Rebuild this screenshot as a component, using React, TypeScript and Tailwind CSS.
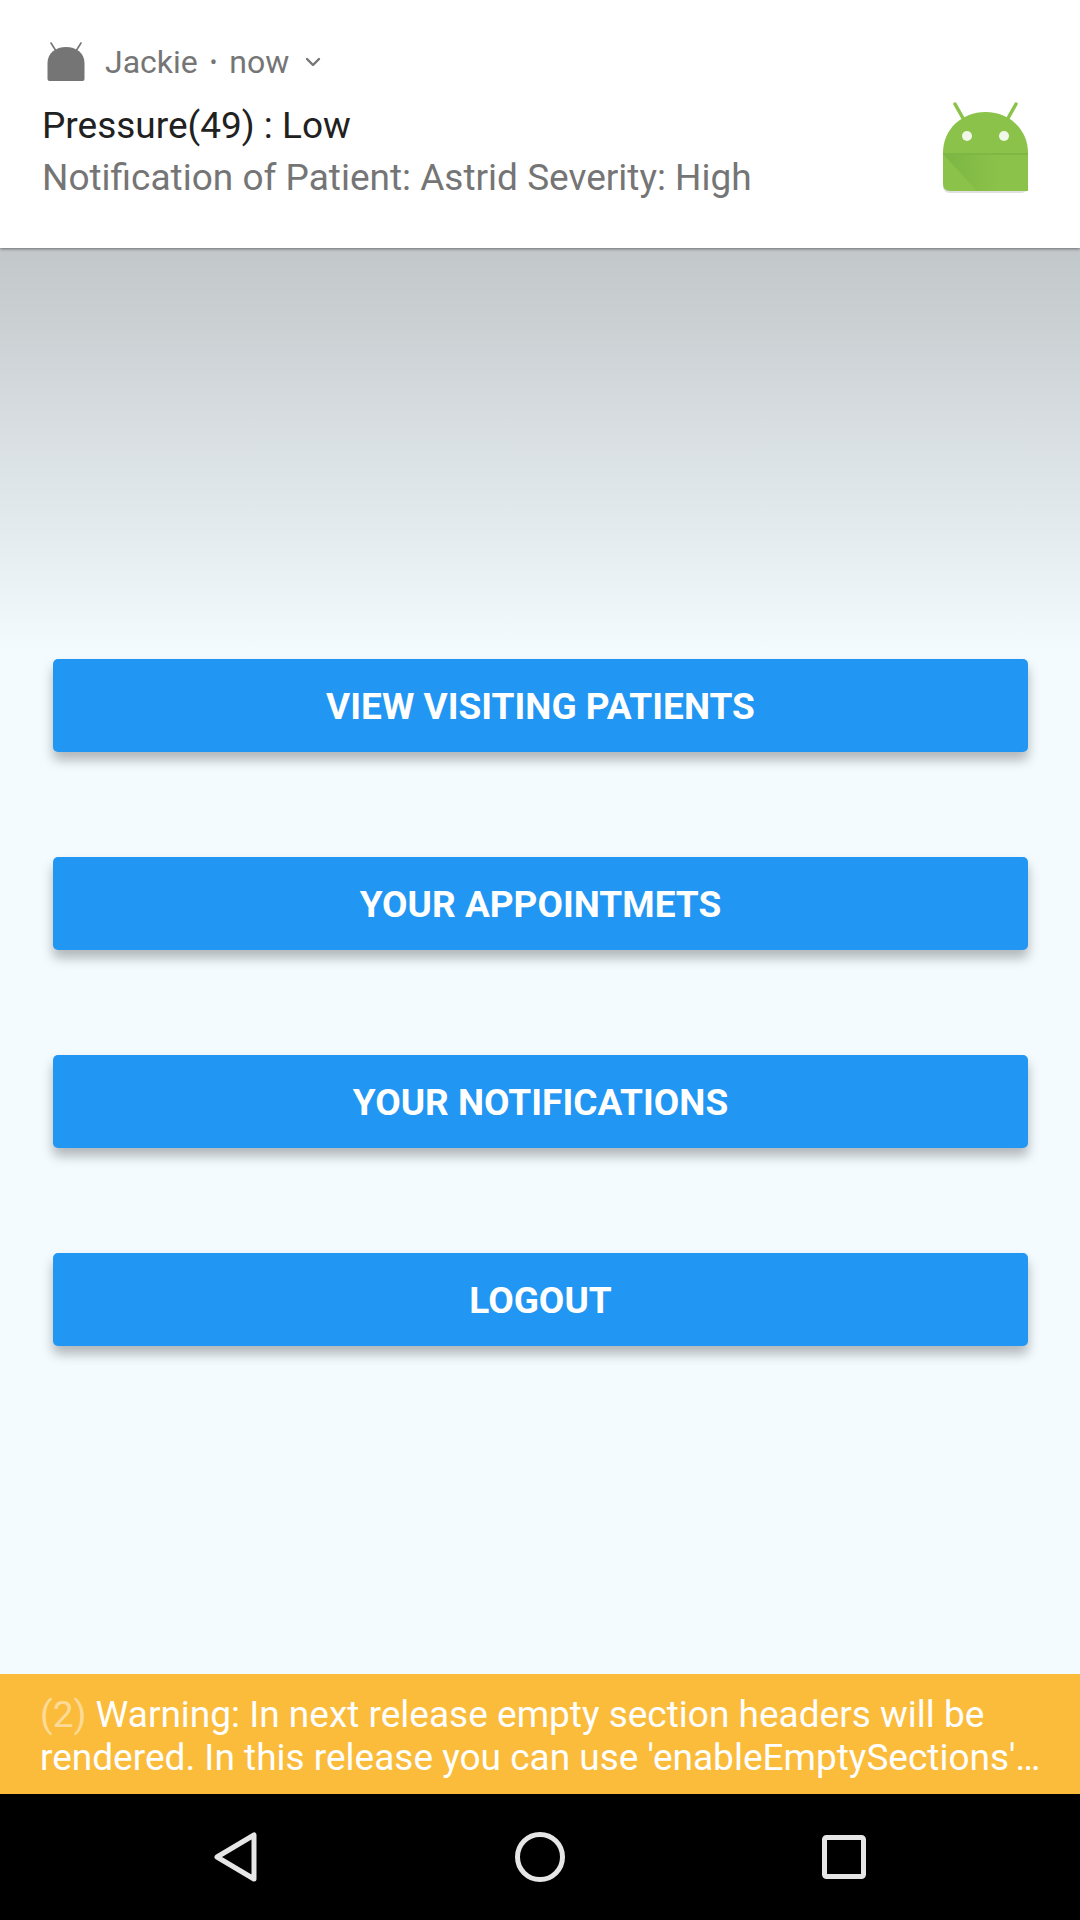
import { ChevronDown } from 'lucide-react';

const BUTTONS = ['VIEW VISITING PATIENTS', 'YOUR APPOINTMETS', 'YOUR NOTIFICATIONS', 'LOGOUT'];

function SmallAndroid() {
  return (
    <svg width="40" height="40" viewBox="0 0 40 40" className="shrink-0">
      <path d="M5 1 L10 9 M35 1 L30 9" stroke="#757575" strokeWidth="1.6" strokeLinecap="round" />
      <path d="M1.5 37 V21 C1.5 11 10 5 20 5 C30 5 38.5 11 38.5 21 V37 Q38.5 39 36.5 39 H3.5 Q1.5 39 1.5 37 Z" fill="#757575" />
    </svg>
  );
}

function LargeAndroid() {
  return (
    <svg width="87" height="92" viewBox="0 0 87 92" className="shrink-0">
      <defs>
        <linearGradient id="fold" x1="0" y1="0" x2="1" y2="0">
          <stop offset="0" stopColor="#7db544" />
          <stop offset="0.7" stopColor="#8bc34a" />
        </linearGradient>
      </defs>
      <path d="M1 53 V84 Q1 91 8 91 H79 Q86 91 86 84 V53 Z" fill="#000000" opacity="0.12" />
      <path d="M13 2 L22 18 M74 2 L65 18" stroke="#8bc34a" strokeWidth="3.5" strokeLinecap="round" />
      <path d="M1 51 C1 27 20 10 43.5 10 C67 10 86 27 86 51 V82 Q86 89 79 89 H8 Q1 89 1 82 Z" fill="#8bc34a" />
      <path d="M1 52 H86 L86 89 H35 Z" fill="url(#fold)" />
      <path d="M1 51 H86 V53 H1 Z" fill="#7fb745" />
      <circle cx="25" cy="34" r="5" fill="#f1f7e8" />
      <circle cx="62" cy="34" r="5" fill="#f1f7e8" />
    </svg>
  );
}

export default function App() {
  return (
    <div className="flex h-[1920px] w-[1080px] flex-col overflow-hidden bg-[#f3fbff] font-['Roboto',sans-serif]">
      <header className="z-10 flex h-[248px] shrink-0 items-start justify-between bg-white pl-[42px] pr-[51px] shadow-[0_1px_3px_rgba(0,0,0,0.45)]">
        <div className="pt-[41px]">
          <div className="flex h-[42px] items-center text-[32px] text-[#757575]">
            <span className="ml-[4px]">
              <SmallAndroid />
            </span>
            <span className="ml-[19px]">Jackie</span>
            <span className="mx-[12px] text-[22px]">•</span>
            <span>now</span>
            <ChevronDown className="ml-[12px]" size={24} strokeWidth={2.4} />
          </div>
          <div className="mt-[18px] text-[37px] leading-[50px] text-[#212121]">Pressure(49) : Low</div>
          <div className="text-[37px] leading-[54px] text-[#757575]">Notification of Patient: Astrid Severity: High</div>
        </div>
        <div className="pt-[102px]">
          <LargeAndroid />
        </div>
      </header>

      <main className="flex flex-1 flex-col bg-gradient-to-b from-[#c2c7c9] to-[#f3fbff] bg-[length:100%_405px] bg-no-repeat pl-[53px] pr-[52px] pt-[411px]">
        <div className="flex flex-col gap-[105px]">
          {BUTTONS.map((label) => (
            <button
              key={label}
              type="button"
              className="flex h-[93px] items-center justify-center rounded-[5px] bg-[#2196f3] pt-[2px] text-[37px] font-bold text-white shadow-[0_8px_12px_rgba(0,0,0,0.28)]"
            >
              {label}
            </button>
          ))}
        </div>
      </main>

      <div className="h-[120px] shrink-0 bg-[#fbbc3c] pl-[40px] pr-[20px] pt-[19px] text-[37px] leading-[43px] text-white">
        <p>
          <span className="text-[#fddb96]">(2)</span> Warning: In next release empty section headers will be
          <br />
          rendered. In this release you can use 'enableEmptySections'…
        </p>
      </div>

      <nav className="flex h-[126px] shrink-0 items-center justify-center bg-black">
        <div className="flex items-center gap-[257px] text-[#e6e6e6]">
          <svg width="44" height="50" viewBox="0 0 44 50" fill="none" stroke="currentColor" strokeWidth="5" strokeLinejoin="round">
            <path d="M40 3 V47 L3 25 Z" />
          </svg>
          <svg width="50" height="50" viewBox="0 0 50 50" fill="none" stroke="currentColor" strokeWidth="5">
            <circle cx="25" cy="25" r="22.5" />
          </svg>
          <svg width="44" height="44" viewBox="0 0 44 44" fill="none" stroke="currentColor" strokeWidth="5" strokeLinejoin="round">
            <rect x="2.5" y="2.5" width="39" height="39" rx="2" />
          </svg>
        </div>
      </nav>
    </div>
  );
}
